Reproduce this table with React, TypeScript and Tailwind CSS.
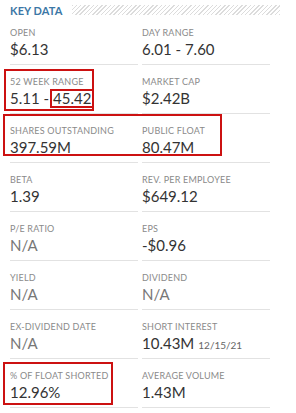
import React from "react";

type Item = { label: string; value: React.ReactNode; na?: boolean; note?: string };

const rows: Item[][] = [
  [
    { label: "Open", value: "$6.13" },
    { label: "Day Range", value: "6.01 - 7.60" },
  ],
  [
    {
      label: "52 Week Range",
      value: (
        <>
          5.11 -
          <span className="inline-block border-2 border-[#cc1111] ml-[1px] px-[1px] leading-[15px]">
            45.42
          </span>
        </>
      ),
    },
    { label: "Market Cap", value: "$2.42B" },
  ],
  [
    { label: "Shares Outstanding", value: "397.59M" },
    { label: "Public Float", value: "80.47M" },
  ],
  [
    { label: "Beta", value: "1.39" },
    { label: "Rev. per Employee", value: "$649.12" },
  ],
  [
    { label: "P/E Ratio", value: "N/A", na: true },
    { label: "EPS", value: "-$0.96" },
  ],
  [
    { label: "Yield", value: "N/A", na: true },
    { label: "Dividend", value: "N/A", na: true },
  ],
  [
    { label: "Ex-Dividend Date", value: "N/A", na: true },
    { label: "Short Interest", value: "10.43M", note: "12/15/21" },
  ],
  [
    { label: "% of Float Shorted", value: "12.96%" },
    { label: "Average Volume", value: "1.43M" },
  ],
];

function Cell({ item }: { item: Item }) {
  return (
    <div className="h-[49px] border-b border-[#e2e2e2] pt-[11px]">
      <div className="text-[9px] leading-[12px] uppercase text-[#8a8a8a] tracking-[0.2px]">
        {item.label}
      </div>
      <div
        className={`text-[15px] leading-[20px] whitespace-nowrap ${
          item.na ? "text-[#777]" : "text-[#333]"
        }`}
      >
        {item.value}
        {item.note && (
          <span className="ml-[4px] text-[10px] text-[#666]">{item.note}</span>
        )}
      </div>
    </div>
  );
}

export default function App() {
  return (
    <div className="relative w-[296px] h-[413px] bg-white overflow-hidden font-['Lato','Liberation_Sans',sans-serif]">
      {/* Header */}
      <div className="h-[16px] flex items-center gap-[10px] pl-[10px] pr-[16px] pt-[4px]">
        <span className="text-[11px] font-bold text-[#3c77a6] leading-none tracking-[0.1px]">
          KEY DATA
        </span>
        <div className="flex-1 h-[10px] bg-[repeating-linear-gradient(135deg,#dcdcdc_0,#dcdcdc_1px,transparent_1px,transparent_3px)]" />
      </div>

      {/* Grid */}
      <div className="grid grid-cols-2 gap-x-[4px] px-[10px] w-[280px]">
        {rows.map((row, i) => (
          <React.Fragment key={i}>
            <Cell item={row[0]} />
            <Cell item={row[1]} />
          </React.Fragment>
        ))}
      </div>

      {/* Red highlight boxes over the screenshot */}
      <div className="absolute left-[4px] top-[69px] w-[90px] h-[42px] border-2 border-[#cc1111]" />
      <div className="absolute left-[3px] top-[114px] w-[219px] h-[42px] border-2 border-[#cc1111]" />
      <div className="absolute left-[3px] top-[362px] w-[110px] h-[43px] border-2 border-[#cc1111]" />
    </div>
  );
}
